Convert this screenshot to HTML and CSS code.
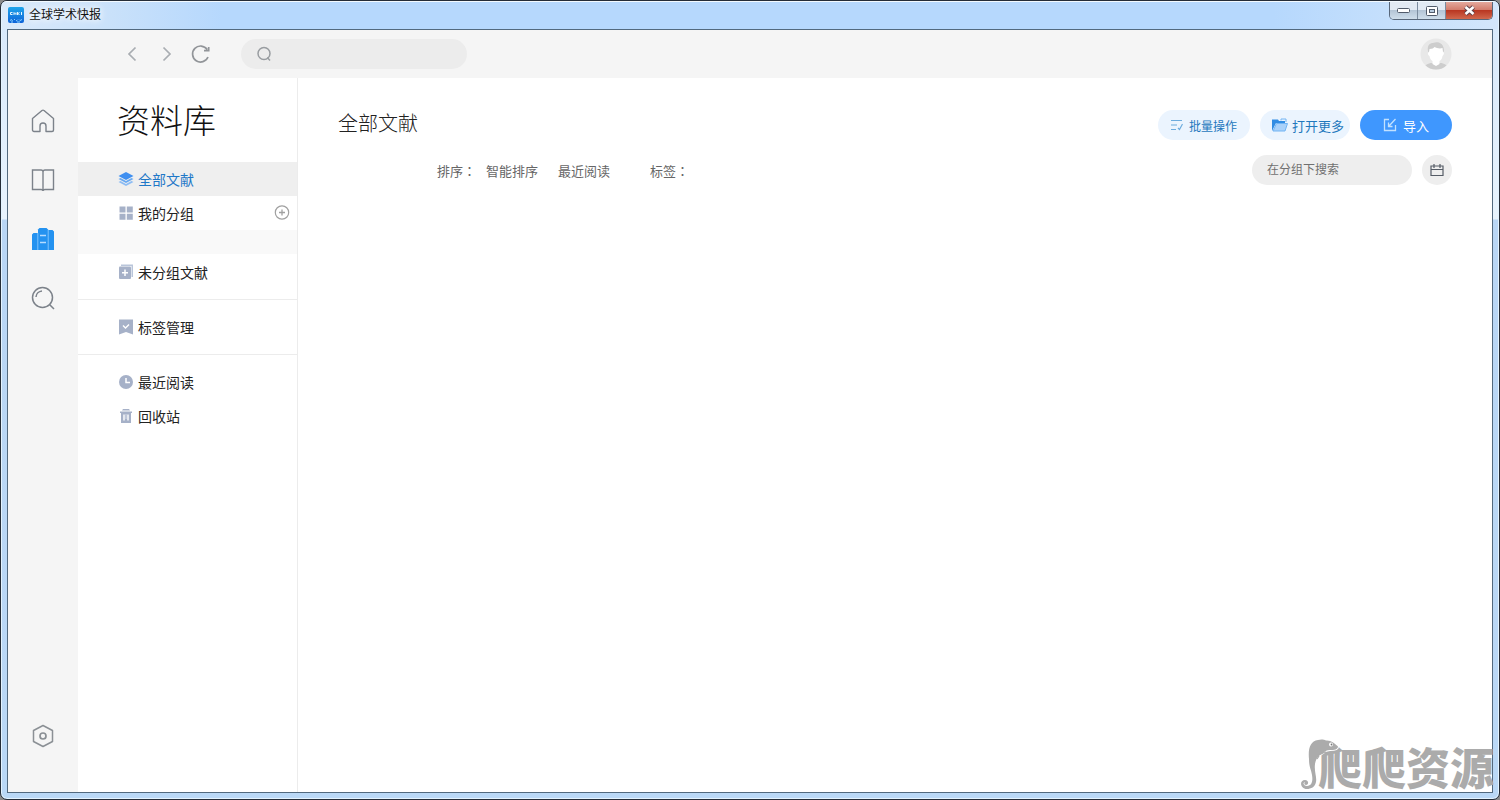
FILE: index.html
```html
<!DOCTYPE html>
<html lang="zh-CN">
<head>
  <meta charset="UTF-8">
  <meta name="viewport" content="width=device-width, initial-scale=1.0">
  <title>全球学术快报</title>
  <link rel="stylesheet" href="styles.css">
</head>
<body>

<div class="window">
  <header class="titlebar">
    <svg class="app-icon" width="16" height="16" viewBox="0 0 16 16">
      <defs><linearGradient id="app" x1="0" y1="0" x2="0" y2="1"><stop offset="0" stop-color="#1ea5ea"/><stop offset="1" stop-color="#0d62d8"/></linearGradient></defs>
      <rect width="16" height="16" rx="2" fill="url(#app)"/>
      <path d="M4.500 5.500H2.500v2h2M6 8V5.500l2 2V5.500M9.500 5v3M11.500 5.500l-1.500 1 1.500 1.500M13.500 5v3" fill="none" stroke="#e6f7ff"/>
      <path d="M2 13.500l1.500-1 1 1.500M6 12.500h1M8 14l1.500-1M11 12.500l1 1 2-1M3 15h2M9 15h3" fill="none" stroke="#8ed4ff"/>
    </svg>
    <span class="app-name">全球学术快报</span>
    <div class="win-buttons">
      <button class="win-btn" aria-label="最小化"><svg width="13" height="7" viewBox="0 0 13 7"><rect x=".5" y="1.500" width="12" height="4" rx="1" fill="#fff" stroke="#515b6a"/></svg></button>
      <button class="win-btn" aria-label="最大化"><svg width="12" height="10" viewBox="0 0 12 10"><rect x=".5" y=".5" width="11" height="9" rx="1" fill="#fff" stroke="#515b6a"/><rect x="3.500" y="3.500" width="5" height="3" fill="#b9cde0" stroke="#515b6a"/></svg></button>
      <button class="win-btn win-close" aria-label="关闭"><svg width="13" height="11" viewBox="0 0 13 11"><path d="M2.500 2l8 7M10.500 2l-8 7" stroke="#5d4049" stroke-width="4.500"/><path d="M2.500 2l8 7M10.500 2l-8 7" stroke="#fff" stroke-width="2.600"/></svg></button>
    </div>
  </header>

  <div class="client">
    <div class="toolbar">
      <div class="nav">
        <button class="icon-btn" aria-label="后退"><svg width="20" height="20" viewBox="0 0 20 20"><path d="M13.500 3.500L7 10l6.500 6.500" fill="none" stroke="#a9adb2" stroke-width="1.700"/></svg></button>
        <button class="icon-btn" aria-label="前进"><svg width="20" height="20" viewBox="0 0 20 20"><path d="M7.500 3.500L14 10l-6.500 6.500" fill="none" stroke="#a9adb2" stroke-width="1.700"/></svg></button>
        <button class="icon-btn" aria-label="刷新"><svg width="20" height="20" viewBox="0 0 20 20"><path d="M17.200 5.500A8 8 0 1 0 18 13M14 6.700h4.700V3" fill="none" stroke="#929599" stroke-width="1.700"/></svg></button>
      </div>
      <label class="search">
        <svg width="16" height="16" viewBox="0 0 16 16"><path d="M11.300 11.500l2.700 3" stroke="#999da1" stroke-width="1.500"/><circle cx="8" cy="7.500" r="6" fill="none" stroke="#999da1" stroke-width="1.500"/></svg>
        <input type="text" aria-label="搜索">
      </label>
      <button class="icon-btn avatar" aria-label="用户">
        <svg width="32" height="32" viewBox="0 0 32 32">
          <defs><clipPath id="face"><circle cx="16" cy="16" r="15.500"/></clipPath></defs>
          <g clip-path="url(#face)">
            <rect width="32" height="32" fill="#e8e8e8"/>
            <path d="M3 32c1-5 5-7 9-7h8c4 0 8 2 9 7z" fill="#cdcdcd"/>
            <path d="M8 13C7 7 10 5 13 5c5-2 11 0 11 8l-2 3H9z" fill="#cdcdcd"/>
            <path d="M9.500 11c3 0 4-1 5-2 2 1 5 2 8 1l.5 4c1.500 0 1 3-.5 4-.5 3-1.500 4-3 5v3l-3.500 2-3.500-2v-3c-1.500-1-2.500-2-3-5-2-1-2-4-.5-4z" fill="#fff"/>
          </g>
        </svg>
      </button>
    </div>

    <div class="workspace">
      <nav class="rail">
        <a class="rail-link" href="#" aria-label="首页"><svg width="24" height="24" viewBox="0 0 24 24"><path d="M9 22.500H3a1.500 1.500 0 0 1-1.500-1.500V9.500L11 1.500q1-.8 2 0l9.500 8V21a1.500 1.500 0 0 1-1.500 1.500h-6V17a3 3 0 0 0-6 0z" fill="none" stroke="#7c828a" stroke-width="1.400" stroke-linejoin="round"/></svg></a>
        <a class="rail-link" href="#" aria-label="阅读"><svg width="24" height="24" viewBox="0 0 24 24"><path d="M12 4q0-2-2-2H1.500v19.500H10q2 0 2 1.500 0-1.500 2-1.500h8.500V2H14q-2 0-2 2zv18" fill="none" stroke="#7c828a" stroke-width="1.400"/></svg></a>
        <a class="rail-link" href="#" aria-label="资料库"><svg width="24" height="24" viewBox="0 0 24 24"><path d="M1 23V7.500L2.500 6H7v17zM17 23V3h4.500L23 4.500V23z" fill="#2492f0"/><path d="M7 23V2.500L8.500 1h7L17 2.500V23z" fill="#2492f0"/><path d="M6.800 6v17M17.200 3v20" stroke="#7fc2fb"/><path d="M9 8.500h6M9 15.500h6" stroke="#b5dcff" stroke-width="1.500"/></svg></a>
        <a class="rail-link" href="#" aria-label="检索"><svg width="24" height="24" viewBox="0 0 24 24"><circle cx="11.500" cy="11.500" r="10" fill="none" stroke="#7c828a" stroke-width="1.500"/><path d="M18.500 18.500l4.500 4.500M5 11a6.500 6.500 0 0 1 6-6" fill="none" stroke="#7c828a" stroke-width="1.500"/></svg></a>
        <a class="rail-link rail-settings" href="#" aria-label="设置"><svg width="24" height="24" viewBox="0 0 24 24"><path d="M12 1.500l9.500 5v11l-9.500 5-9.500-5v-11z" fill="none" stroke="#8b9095" stroke-width="1.500" stroke-linejoin="round"/><circle cx="12" cy="12" r="3" fill="none" stroke="#8b9095" stroke-width="1.700"/></svg></a>
      </nav>

      <aside class="sidebar">
        <h1>资料库</h1>
        <div class="group">
          <a class="item active" href="#"><svg width="16" height="16" viewBox="0 0 16 16"><path d="M.5 11L8 15l7.500-4-2-1L8 13l-5.500-3z" fill="#8dbcf3"/><path d="M.5 8L8 12l7.500-4-2-1L8 10 2.500 7z" fill="#68a9f2"/><path d="M8 1l7.500 4L8 9 .5 5z" fill="#3f8ff0"/></svg>全部文献</a>
          <div class="item-row">
            <a class="item" href="#"><svg width="16" height="16" viewBox="0 0 16 16"><path d="M1.500 1.500h6v6h-6zM8.800 1.500h6v6h-6zM1.500 8.700h6v6h-6zM8.800 8.700h6v6h-6z" fill="#a6b1c8"/></svg>我的分组</a>
            <button class="icon-btn add" aria-label="新建分组"><svg width="16" height="16" viewBox="0 0 16 16"><circle cx="8" cy="7.500" r="6.700" fill="none" stroke="#a0a0a0" stroke-width="1.200"/><path d="M8 4.500v6M5 7.500h6" stroke="#a0a0a0" stroke-width="1.300"/></svg></button>
          </div>
        </div>
        <div class="band"></div>
        <div class="group ungrouped">
          <a class="item" href="#"><svg width="16" height="16" viewBox="0 0 16 16"><path d="M3 2V.5h12V13h-1.500V2z" fill="#b9c5da"/><rect x="1" y="2.500" width="12" height="12.500" rx="1" fill="#a6b1c8"/><path d="M7 5.500v6.500M4 8.800h6" stroke="#fff" stroke-width="1.500"/></svg>未分组文献</a>
        </div>
        <div class="group">
          <a class="item" href="#"><svg width="16" height="16" viewBox="0 0 16 16"><path d="M1 .5h14v15L8 13l-7 2.500z" fill="#a6b1c8"/><path d="M5 6.500l2.500 2.500L11 5.500" fill="none" stroke="#fff" stroke-width="1.400"/></svg>标签管理</a>
        </div>
        <div class="group">
          <a class="item" href="#"><svg width="16" height="16" viewBox="0 0 16 16"><circle cx="8" cy="8" r="7" fill="#a6b1c8"/><path d="M8 4v4.500h4" fill="none" stroke="#fff" stroke-width="1.500"/></svg>最近阅读</a>
          <a class="item" href="#"><svg width="16" height="16" viewBox="0 0 16 16"><path d="M4 2.500l1-1.500h6l1 1.500zM2 3.500h12V5H2z" fill="#a6b1c8"/><path d="M3 5h10v10H3z" fill="#a6b1c8"/><path d="M6 6.500v6M10 6.500v6" stroke="#fff" stroke-width="1.400"/><path d="M8 6v5" stroke="#e4e9f2" stroke-width=".8"/></svg>回收站</a>
        </div>
      </aside>

      <main class="content">
        <div class="content-head">
          <h2>全部文献</h2>
          <div class="actions">
            <button class="pill"><svg width="12" height="12" viewBox="0 0 12 12"><path d="M0 1.500h11M0 6h6M0 10.500h5M7 9l1.500 1.500L11.500 5" fill="none" stroke="#6dacde" stroke-width="1.200"/></svg>批量操作</button>
            <button class="pill pill-open"><svg width="16" height="14" viewBox="0 0 16 14"><path d="M0 13V1.500h6l1 1.500h6v2H4z" fill="#318ce3"/><path d="M4.500 5.500H15.500L13 13H1z" fill="#a9d1fa" stroke="#72b4f3"/><path d="M9 2.500V1h5v3" fill="none" stroke="#72b4f3"/></svg>打开更多</button>
            <button class="pill primary"><svg width="14" height="14" viewBox="0 0 14 14"><path d="M6 1.500H1.500v11h11V7M12.500 1L6 8M5.500 4.500v4h4" fill="none" stroke="#c2e1ff" stroke-width="1.300"/></svg>导入</button>
          </div>
        </div>
        <div class="filters">
          <span class="filter-label" lang="zh-TW">排序：</span>
          <button class="filter">智能排序</button>
          <button class="filter">最近阅读</button>
          <span class="filter-label tags" lang="zh-TW">标签：</span>
          <div class="filter-tools">
            <input class="group-search" type="text" placeholder="在分组下搜索" aria-label="在分组下搜索">
            <button class="calendar" aria-label="日期"><svg width="14" height="14" viewBox="0 0 14 14"><path d="M1 3h12v9.500H1zM1 6.500h12M4 1v4M10 1v4" fill="none" stroke="#555c66" stroke-width="1.200"/></svg></button>
          </div>
        </div>
      </main>
    </div>
  </div>

  <div class="watermark">
    <svg width="40" height="52" viewBox="0 0 40 52">
      <path d="M9 20C8 10 10 2 18 1c3-1 6-.5 8 .5 5-.5 9 3 12 6 0 3-4 3.500-8 3.500-3 0-5 1-7 3-4 2-7 5-8 11-1 8 2 13 1 18-1 5-5 7-9 7-7 0-8-9-2-9 4 0 4 5 1 5-2 0-2-2-1-3-3 1-1 4 2 4 5 0 6-5 5-11C11 30 9 28 9 20z" fill="#ababab" stroke="#fff" stroke-width="2" paint-order="stroke"/>
      <path d="M16 18c1-2 3-2 5-3l4-2 2 1-4 3M19 17l-2 3" fill="none" stroke="#ababab" stroke-width="1.300"/>
      <circle cx="31" cy="5.500" r="2" fill="#fff"/><circle cx="31.500" cy="5.500" r=".9" fill="#777"/>
    </svg>
    <span>爬爬资源</span>
  </div>
</div>

</body>
</html>
```
FILE: styles.css
```css
* { box-sizing: border-box; }
body { margin: 0; background: #8a8a8a; font-family: "Liberation Sans", "Noto Sans CJK SC", sans-serif; color: #222; font-size: 14px; }
button, input { font: inherit; color: inherit; border: none; background: none; padding: 0; }
button { cursor: pointer; }
a { color: inherit; text-decoration: none; }
svg { display: block; flex: none; }
h1, h2 { margin: 0; font-weight: 300; }

/* window frame */
.window { position: relative; display: flex; flex-direction: column; height: 100vh; padding: 0 6px 6px; border: 1px solid #252d38; border-radius: 7px; overflow: hidden; box-shadow: inset 0 0 0 1px #e3f3ff; background: linear-gradient(#d6e8fb 0, #e8f3fd 218px, #b9d6f5 219px, #bad8f6 100%); }
.titlebar { display: flex; align-items: flex-start; height: 28px; margin: 0 -5px; padding-left: 5px; background: linear-gradient(90deg, #dbeafa 0, #c9e1fa 110px, #b6d8fd 220px, #b6d8fd 85%, #d3e6fb 100%); border-top: 1px solid #f3faff; }
.app-icon { margin: 5px 5px 0 1px; }
.app-name { color: #111; font-size: 12px; line-height: 27px; text-shadow: 0 0 6px #fff, 0 0 8px #fff; }
.win-buttons { display: flex; height: 18px; margin-left: auto; margin-right: 5px; border: 1px solid #58677a; border-top: none; border-radius: 0 0 5px 5px; overflow: hidden; }
.win-btn { display: flex; align-items: center; justify-content: center; width: 28px; border-right: 1px solid #7b8c9f; background: linear-gradient(#e2eaf3 45%, #b4c5d6 50%, #cfdeeb); }
.win-close { width: 46px; border-right: none; background: linear-gradient(#e4a99d 0, #d37d6d 45%, #b93722 50%, #d1684d 100%); }

/* application */
.client { display: flex; flex: 1; flex-direction: column; min-height: 0; border: 1px solid #52697e; background: #f5f5f5; }
.toolbar { display: flex; align-items: center; height: 48px; padding: 0 40px 0 114px; }
.nav { display: flex; gap: 14px; }
.icon-btn { display: flex; align-items: center; justify-content: center; }
.search { display: flex; align-items: center; width: 226px; height: 30px; margin-left: 31px; padding: 0 15px; border-radius: 15px; background: #ececec; }
.search input { flex: 1; min-width: 0; padding-left: 8px; outline: none; }
.avatar { margin-left: auto; }
.workspace { display: flex; flex: 1; min-height: 0; }
.rail { display: flex; flex-direction: column; gap: 35px; width: 70px; padding: 31px 23px 44px; }
.rail-settings { margin-top: auto; }

.sidebar { width: 220px; border-right: 1px solid #ececec; background: #fff; }
.sidebar h1 { padding: 20px 0 16px 39px; font-size: 33px; line-height: 48px; color: #111; }
.item { display: flex; flex: 1; align-items: center; gap: 4px; height: 34px; padding-left: 40px; }
.item.active { background: #efefef; color: #1f78c8; }
.item-row { display: flex; align-items: center; }
.add { margin-right: 7px; }
.band { height: 24px; background: #f9f9f9; }
.group + .group { padding-top: 10px; border-top: 1px solid #ececec; }
.group { padding-bottom: 10px; }
.group:first-of-type { padding-bottom: 0; }
.ungrouped { padding-top: 1px; }

.content { flex: 1; min-width: 0; padding: 32px 40px; background: #fff; }
.content-head { display: flex; justify-content: space-between; }
.content-head h2 { font-size: 20px; line-height: 28px; }
.actions { display: flex; gap: 10px; }
.pill { display: flex; align-items: center; justify-content: center; gap: 6px; width: 92px; height: 30px; border-radius: 15px; background: #ebf4fe; color: #1f78bd; font-size: 12px; }
.pill-open { justify-content: flex-end; gap: 4px; width: 90px; padding-right: 6px; font-size: 13px; }
.primary { background: #3f97fe; color: #fff; font-size: 13px; }
.filters { display: flex; align-items: center; margin-top: 15px; padding-left: 99px; color: #666; font-size: 13px; }
.filter-label { margin-right: 10px; font-family: "Noto Sans CJK TC", sans-serif; }
.filter { margin-right: 20px; }
.tags { margin-left: 20px; }
.filter-tools { display: flex; gap: 10px; margin-left: auto; }
.group-search { width: 160px; height: 30px; padding: 0 15px; border-radius: 15px; background: #eee; font-size: 12px; }
.group-search::placeholder { color: #707070; opacity: 1; }
.calendar { display: flex; align-items: center; justify-content: center; width: 30px; height: 30px; border-radius: 50%; background: #eee; }

.watermark { position: absolute; right: 5px; bottom: 8px; display: flex; align-items: flex-end; color: #ababab; font-size: 44px; line-height: 42px; font-weight: 900; }
.watermark svg { z-index: 1; }
.watermark span { margin-left: -22px; }
```
